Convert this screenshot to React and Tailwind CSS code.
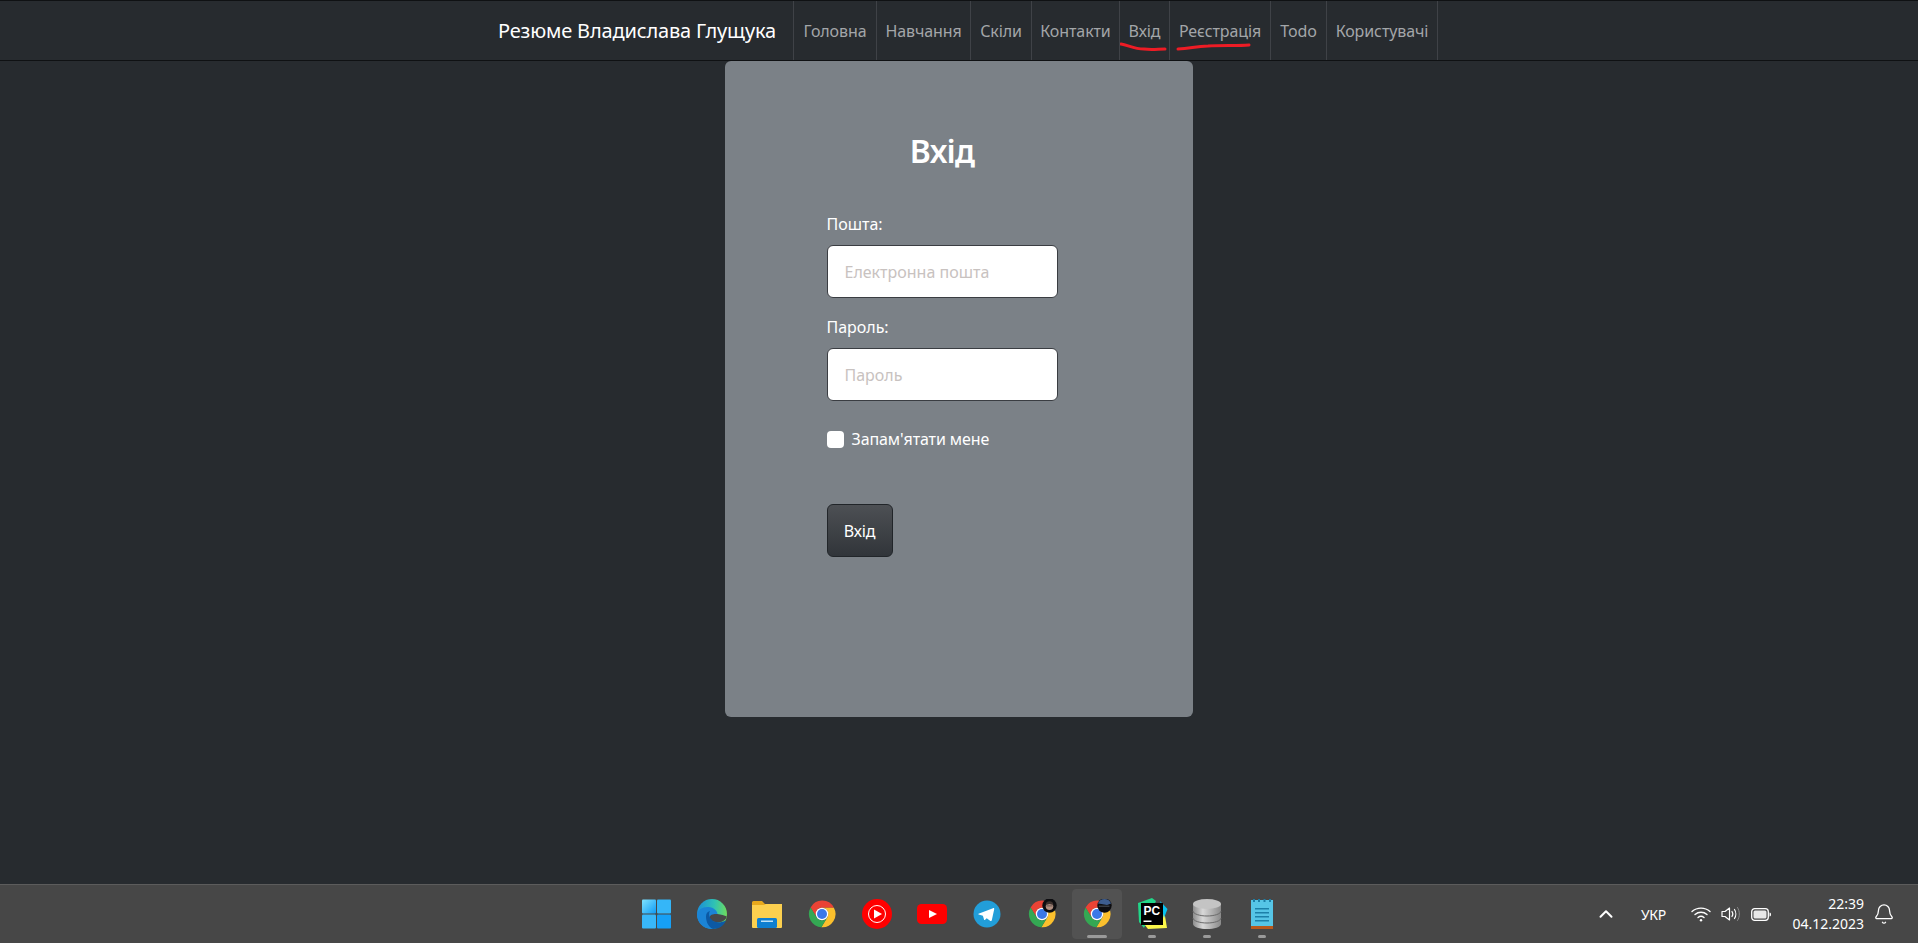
import { Bell, ChevronUp } from "lucide-react";

const navItems = [
  { label: "Головна", width: "w-[83px]" },
  { label: "Навчання", width: "w-[94px]" },
  { label: "Скіли", width: "w-[61px]" },
  { label: "Контакти", width: "w-[88px]" },
  { label: "Вхід", width: "w-[50px]", mark: "M1 2 C8 3 14 7 24 7 C32 8 38 7 45 7" },
  { label: "Реєстрація", width: "w-[101px]", mark: "M8 7 C20 7 25 4 38 4 C50 3 68 4 79 3" },
  { label: "Todo", width: "w-[56px]" },
  { label: "Користувачі", width: "w-[111px]" },
];

function ChromeIcon({ children }) {
  return (
    <svg width="30" height="30" viewBox="0 0 48 48">
      <path fill="#ea4335" d="M24 14H43A21 21 0 0 0 5.8 13.5L15.34 29A10 10 0 0 1 24 14Z" />
      <path fill="#fbc02d" d="M43 14H24A10 10 0 0 1 32.66 29L23 45A21 21 0 0 0 43 14Z" />
      <path fill="#34a853" d="M5.8 13.5L15.34 29A10 10 0 0 0 32.66 29L23 45A21 21 0 0 1 5.8 13.5Z" />
      <circle cx="24" cy="24" r="10" fill="#fff" />
      <circle cx="24" cy="24" r="8" fill="#3b78e7" />
      {children}
    </svg>
  );
}

function WindowsIcon() {
  return (
    <svg width="30" height="30" viewBox="0 0 30 30">
      <defs>
        <linearGradient id="win" x1="0" y1="0" x2="1" y2="1">
          <stop offset="0" stopColor="#7fe3ff" />
          <stop offset="1" stopColor="#0f9bf5" />
        </linearGradient>
      </defs>
      <rect x="0" y="0.500" width="14" height="14" rx="1" fill="url(#win)" />
      <rect x="15" y="0.500" width="14" height="14" rx="1" fill="#35b6f8" />
      <rect x="0" y="15.500" width="14" height="14" rx="1" fill="#38b7f9" />
      <rect x="15" y="15.500" width="14" height="14" rx="1" fill="#16a0f6" />
    </svg>
  );
}

function EdgeIcon() {
  return (
    <svg width="30" height="30" viewBox="0 0 30 30">
      <defs>
        <linearGradient id="edgeTop" x1="0" y1="0.400" x2="1" y2="0.500">
          <stop offset="0" stopColor="#1b8fd8" />
          <stop offset="0.550" stopColor="#2fc2b4" />
          <stop offset="1" stopColor="#6fdc5c" />
        </linearGradient>
      </defs>
      <circle cx="15" cy="15" r="15" fill="url(#edgeTop)" />
      <path fill="#1b84d6" d="M0 15.500C1 10.500 6 7.500 11.500 8C16.500 8.500 20.500 11.500 20.500 15.500L14 19L16 30C7 30.500 0 24 0 15.500Z" />
      <path fill="#484848" d="M12.500 18.500C13 15.500 17 14.500 20.500 15C24 15.500 27.500 16.500 29.800 17.500C29 20.500 26 23 22 23.200C17 23.500 12.500 21.500 12.500 18.500Z" />
      <path fill="#0c59a4" d="M9 17.500C9 14.500 10.500 12.500 13 12C11.500 14 11.800 17.500 14 20C17 23.500 23 24.500 29 21.500C27 26.500 22 30 16 30C11 28 9 22 9 17.500Z" />
    </svg>
  );
}

function FolderIcon() {
  return (
    <svg width="30" height="30" viewBox="0 0 30 30">
      <path fill="#e8a91d" d="M0 3.500A1.500 1.500 0 0 1 1.500 2H10L13 5H30V10H0Z" />
      <path fill="#fcd04f" d="M0 6H12L14 5H30V28A1 1 0 0 1 29 29H1A1 1 0 0 1 0 28Z" />
      <rect x="5" y="19" width="20" height="10" rx="1.500" fill="#0f7fd0" />
      <rect x="9" y="21.500" width="12" height="1.500" fill="#bfe3f7" />
    </svg>
  );
}

function YtMusicIcon() {
  return (
    <svg width="30" height="30" viewBox="0 0 30 30">
      <circle cx="15" cy="15" r="15" fill="#ff0000" />
      <circle cx="15" cy="15" r="8.500" fill="none" stroke="#fff" strokeWidth="1" />
      <path fill="#fff" d="M12 10.500L20 15L12 19.500Z" />
    </svg>
  );
}

function YoutubeIcon() {
  return (
    <svg width="30" height="30" viewBox="0 0 30 30">
      <rect x="0" y="5" width="30" height="20" rx="4.500" fill="#ff0000" />
      <path fill="#fff" d="M12 11L20 15L12 19Z" />
    </svg>
  );
}

function TelegramIcon() {
  return (
    <svg width="30" height="30" viewBox="0 0 30 30">
      <circle cx="15" cy="15" r="13.500" fill="#229ed9" />
      <path fill="#fff" d="M6.500 14.800L21 9.200C21.800 8.900 22.400 9.400 22.200 10.300L19.800 21.300C19.600 22.100 19.100 22.300 18.400 21.900L14.700 19.200L12.900 20.900C12.600 21.200 12.200 21.100 12.100 20.700L10.900 16.800L6.700 15.500C6.100 15.300 6.100 15 6.500 14.800Z" />
    </svg>
  );
}

function PyCharmIcon() {
  return (
    <svg width="32" height="32" viewBox="0 0 32 32">
      <path fill="#21d789" d="M2 5L16 0L20 3L8 30L3 24Z" />
      <path fill="#fcf84a" d="M8 26L27 6L31 30L12 31Z" />
      <path fill="#07c3f2" d="M24 3L31.500 11L28 20Z" />
      <rect x="5" y="5" width="22" height="22" fill="#000" />
      <text x="7.500" y="16.500" fill="#fff" fontFamily="Liberation Sans, sans-serif" fontWeight="700" fontSize="12">PC</text>
      <rect x="7.500" y="22.500" width="8" height="1.500" fill="#fff" />
    </svg>
  );
}

function DatabaseIcon() {
  return (
    <svg width="30" height="30" viewBox="0 0 30 30">
      <defs>
        <linearGradient id="dbBody" x1="0" y1="0" x2="1" y2="0">
          <stop offset="0" stopColor="#8e8e8e" />
          <stop offset="0.350" stopColor="#d8d8d8" />
          <stop offset="1" stopColor="#8a8a8a" />
        </linearGradient>
      </defs>
      <path fill="url(#dbBody)" d="M1 5V25C1 28 8 30 15 30S29 28 29 25V5Z" />
      <ellipse cx="15" cy="5" rx="14" ry="5" fill="#c4c4c4" />
      <path fill="none" stroke="#6a6a6a" strokeWidth="1" d="M1 12C1 15 8 17 15 17S29 15 29 12M1 19C1 22 8 24 15 24S29 22 29 19" />
    </svg>
  );
}

function NotepadIcon() {
  return (
    <svg width="24" height="30" viewBox="0 0 24 30">
      <rect x="1" y="1" width="22" height="27" fill="#56c5e6" />
      <rect x="1" y="27" width="22" height="3" fill="#b8591d" />
      <path fill="#1c80a8" d="M5 9H19V10.500H5ZM5 13H19V14.500H5ZM5 17H19V18.500H5ZM5 21H19V22.500H5Z" />
      <path fill="#1c80a8" d="M3 0H5V3H3ZM8 0H10V3H8ZM13.500 0H15.500V3H13.500ZM19 0H21V3H19Z" />
    </svg>
  );
}

function Avatar({ dark }) {
  if (dark) {
    return (
      <>
        <circle cx="36" cy="10.500" r="11.500" fill="#0d0d10" />
        <path fill="#3d5d8f" d="M25.500 7A11.500 11.500 0 0 1 46.500 7L40 9.500L31 8Z" />
        <path fill="none" stroke="#8b95a3" strokeWidth="0.800" d="M27 11.500H44" />
      </>
    );
  }
  return (
    <>
      <circle cx="36" cy="10.500" r="11.500" fill="#0d0d10" />
      <circle cx="36" cy="11.500" r="6" fill="#b08e80" />
      <path fill="#3a2f2c" d="M30 9.500A6 6 0 0 1 42 9.500L36 8Z" />
      <path fill="none" stroke="#2c2c2c" strokeWidth="0.900" d="M31 11H41" />
    </>
  );
}

function WifiIcon() {
  return (
    <svg width="20" height="16" viewBox="0 0 20 16" fill="none" stroke="#fff" strokeWidth="1.400" strokeLinecap="round">
      <path d="M1 5.500C6 1 14 1 19 5.500" />
      <path d="M4 8.500C7.500 5.500 12.500 5.500 16 8.500" />
      <path d="M7 11.500C8.800 10 11.200 10 13 11.500" />
      <circle cx="10" cy="14.300" r="1.200" fill="#fff" stroke="none" />
    </svg>
  );
}

function SpeakerIcon() {
  return (
    <svg width="20" height="16" viewBox="0 0 20 16" fill="none" stroke="#fff" strokeWidth="1.200" strokeLinejoin="round" strokeLinecap="round">
      <path d="M1 5.500H4L8.500 2V14L4 10.500H1Z" />
      <path d="M11 5.500C12 7 12 9 11 10.500" />
      <path d="M13.500 3.500C15.200 6 15.200 10 13.500 12.500" />
      <path d="M16.500 1.500C19 5.500 19 10.500 16.500 14.500" stroke="#8a8a8a" strokeWidth="1" />
    </svg>
  );
}

function BatteryIcon() {
  return (
    <svg width="20" height="13" viewBox="0 0 20 13">
      <rect x="0.700" y="0.700" width="16.600" height="11.600" rx="3" fill="none" stroke="#fff" strokeWidth="1.300" />
      <rect x="2.500" y="2.500" width="13" height="8" rx="1.500" fill="#e8e8e8" />
      <path fill="#fff" d="M18.500 4.500C19.500 4.500 20 5.200 20 6.500S19.500 8.500 18.500 8.500Z" />
    </svg>
  );
}

function TaskbarCell({ active, dot, children }) {
  return (
    <div className="relative flex h-[50px] w-[55px] items-center justify-center">
      {active && <div className="absolute left-[2.500px] top-0 h-[50px] w-[50px] rounded-[4px] border border-[#525252] bg-[#525252]" />}
      <div className="relative flex">{children}</div>
      {dot && <div className={`absolute bottom-[1px] h-[3px] rounded-full bg-[#9a9a9a] ${active ? "w-5" : "w-2"}`} />}
    </div>
  );
}

function Field({ label, placeholder, type }) {
  return (
    <div className="mb-[17px]">
      <label className="mb-[9px] block h-6 leading-6 text-white">{label}</label>
      <input
        type={type}
        placeholder={placeholder}
        className="h-[53px] w-[231px] rounded-[6px] border border-[#3a3d42] bg-white px-[17px] text-[#212529] outline-none placeholder:text-[#c8c2c0]"
      />
    </div>
  );
}

export default function App() {
  return (
    <div className="flex h-[943px] flex-col overflow-hidden bg-[#272b2f] text-[16px] [font-family:'Noto_Sans',sans-serif]">
      {/* Navbar */}
      <nav className="flex h-[61px] shrink-0 border-y border-[#0f1113] pl-[498px]">
        <a className="w-[295px] pt-[17px] text-[20px] leading-[26px] tracking-[-0.16px] text-white">Резюме Владислава Глущука</a>
        <ul className="flex border-r border-[#3f4247]">
          {navItems.map((item) => (
            <li key={item.label} className={`relative flex justify-center border-l border-[#3f4247] pt-[18px] leading-6 tracking-[-0.1px] text-[#a3a6a9] ${item.width}`}>
              {item.label}
              {item.mark && (
                <svg className="absolute left-0 top-[41px]" width="90" height="10" viewBox="0 0 90 10">
                  <path d={item.mark} fill="none" stroke="#ee1c25" strokeWidth="3" strokeLinecap="round" />
                </svg>
              )}
            </li>
          ))}
        </ul>
      </nav>

      {/* Login card */}
      <main className="flex flex-1 justify-center">
        <div className="ml-[-1px] h-[656px] w-[468px] rounded-[6px] bg-[#7b8187] pl-[102px] pt-[66px]">
          <h1 className="mb-[37px] w-[231px] text-center text-[32px] font-semibold leading-[48px] tracking-[-0.8px] text-white">Вхід</h1>
          <Field label="Пошта:" placeholder="Електронна пошта" type="email" />
          <Field label="Пароль:" placeholder="Пароль" type="password" />
          <label className="mt-[21px] flex h-[34px] items-center gap-2 tracking-[-0.1px] text-white">
            <input type="checkbox" className="h-[17px] w-[17px] appearance-none rounded-[4px] bg-white" />
            Запам'ятати мене
          </label>
          <button className="mt-[48px] h-[53px] w-[66px] rounded-[6px] border border-[#212529] bg-gradient-to-b from-[#4d5054] to-[#31353a] tracking-[-0.2px] text-white">
            Вхід
          </button>
        </div>
      </main>

      {/* Taskbar */}
      <footer className="relative flex h-[59px] shrink-0 items-center justify-center border-t border-[#5c5c5c] bg-[#474747] text-white">
        <div className="flex">
          <TaskbarCell><WindowsIcon /></TaskbarCell>
          <TaskbarCell><EdgeIcon /></TaskbarCell>
          <TaskbarCell><FolderIcon /></TaskbarCell>
          <TaskbarCell><ChromeIcon /></TaskbarCell>
          <TaskbarCell><YtMusicIcon /></TaskbarCell>
          <TaskbarCell><YoutubeIcon /></TaskbarCell>
          <TaskbarCell><TelegramIcon /></TaskbarCell>
          <TaskbarCell><ChromeIcon><Avatar /></ChromeIcon></TaskbarCell>
          <TaskbarCell active dot><ChromeIcon><Avatar dark /></ChromeIcon></TaskbarCell>
          <TaskbarCell dot><PyCharmIcon /></TaskbarCell>
          <TaskbarCell dot><DatabaseIcon /></TaskbarCell>
          <TaskbarCell dot><NotepadIcon /></TaskbarCell>
        </div>
        <div className="absolute right-[23px] top-0 flex h-full items-center text-[14px]">
          <ChevronUp size={22} strokeWidth={2.200} className="mr-[24px]" />
          <span className="mr-[25px] w-[25px] tracking-[-0.3px]">УКР</span>
          <div className="mr-[10px]"><WifiIcon /></div>
          <div className="mr-[10px]"><SpeakerIcon /></div>
          <BatteryIcon />
          <div className="ml-[21px] mr-[9px] w-[72px] text-right leading-[20px]">
            <div>22:39</div>
            <div>04.12.2023</div>
          </div>
          <Bell size={22} strokeWidth={1.400} />
        </div>
      </footer>
    </div>
  );
}
